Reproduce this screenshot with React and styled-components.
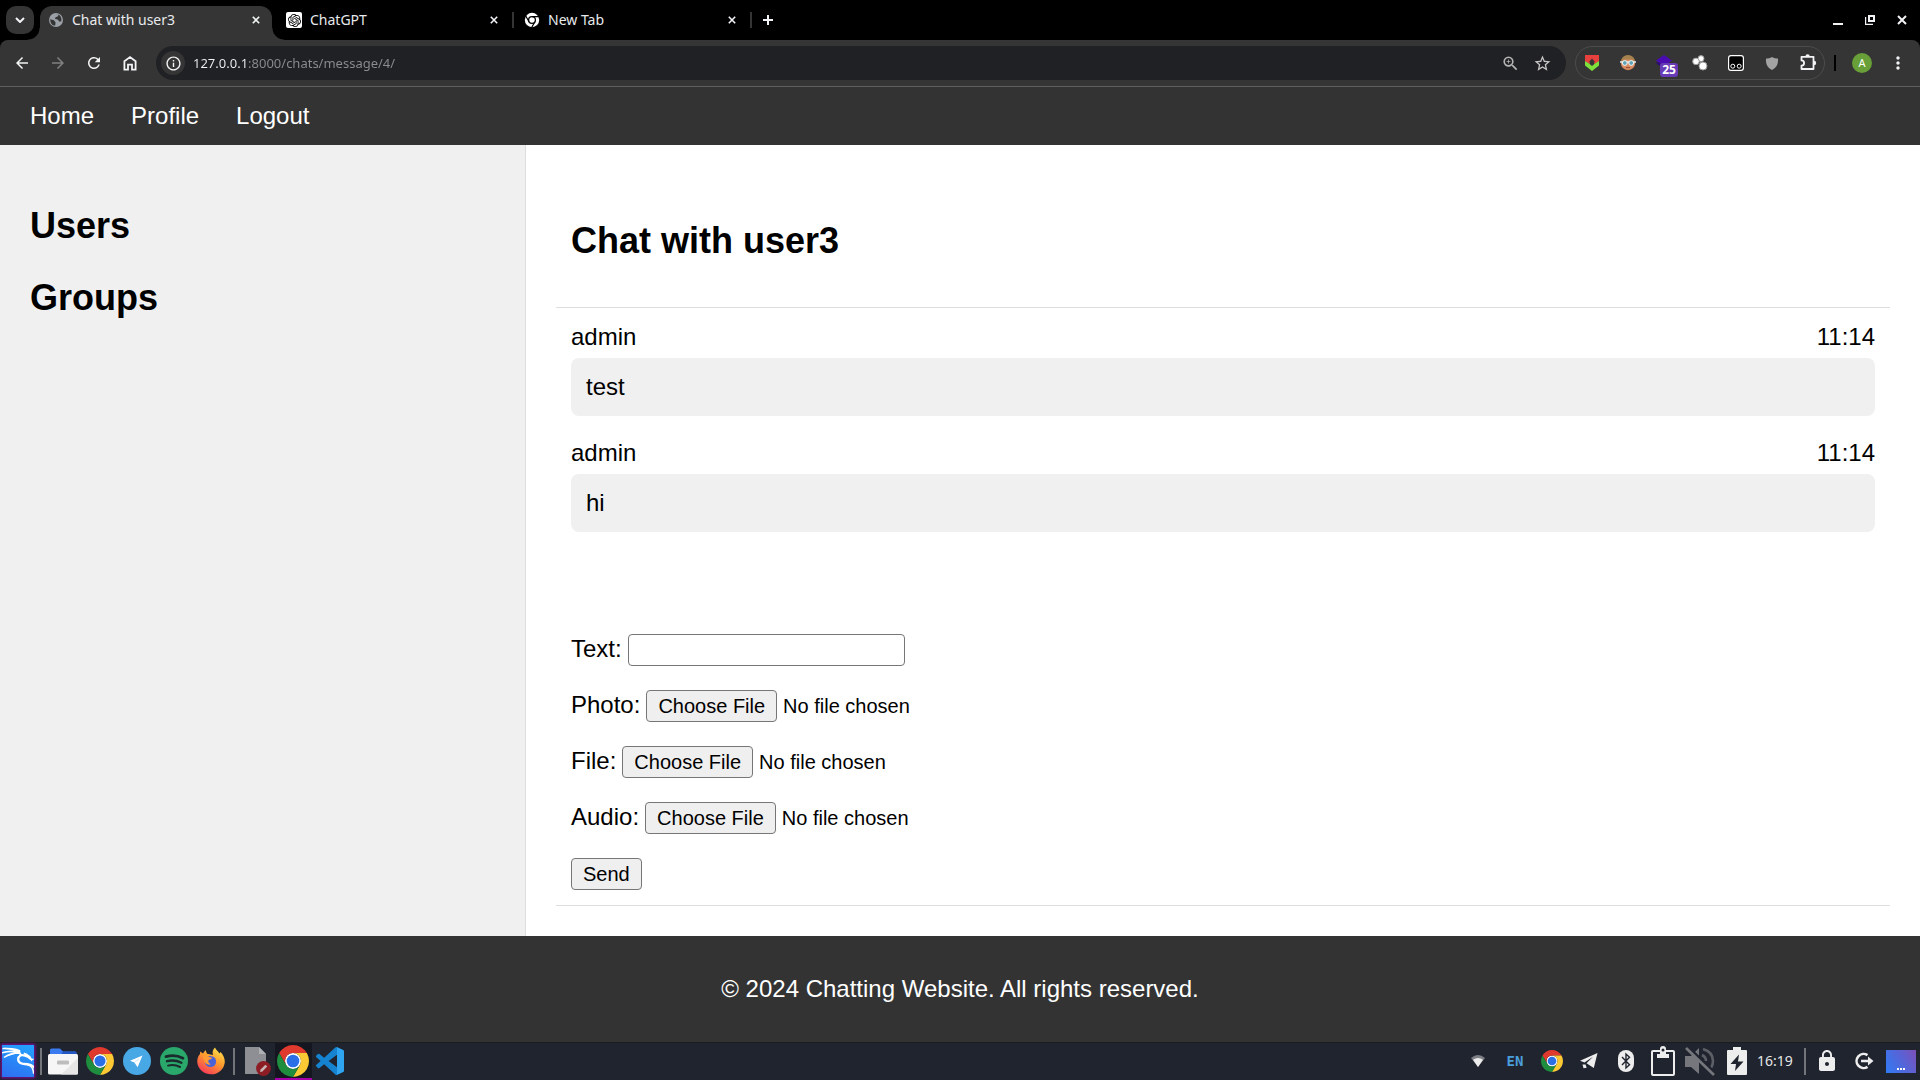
import React from "react";
import styled, { createGlobalStyle } from "styled-components";
import { SiKalilinux, SiOpenai } from "react-icons/si";
import {
  MdArrowBack,
  MdArrowForward,
  MdRefresh,
  MdInfoOutline,
  MdZoomIn,
  MdStarBorder,
  MdMoreVert,
  MdLock,
} from "react-icons/md";

const Global = createGlobalStyle`
  *, *::before, *::after { box-sizing: border-box; }
  body { margin: 0; background: #fff; }
  button { font: inherit; }
  svg { display: block; flex: none; }
`;

const uiFont = `"Noto Sans", "Open Sans", sans-serif`;
const pageFont = `"Liberation Sans", Arial, sans-serif`;

const Screen = styled.div`
  min-height: 100vh;
  display: flex;
  flex-direction: column;
`;

/* ---------- browser ---------- */

const TabStrip = styled.header`
  display: flex;
  align-items: center;
  height: 40px;
  padding: 0 2px 0 6px;
  background: #000;
  color: #e8eaed;
  font: 14px/20px ${uiFont};
`;

const PlainButton = styled.button`
  display: flex;
  align-items: center;
  justify-content: center;
  flex: none;
  width: ${(p) => p.$size || 20}px;
  height: ${(p) => p.$size || 20}px;
  padding: 0;
  border: 0;
  background: none;
  color: ${(p) => p.$color || "#f1f3f4"};
`;

const TabSearch = styled(PlainButton)`
  width: 28px;
  height: 28px;
  margin-right: 6px;
  border-radius: 10px;
  background: #353535;
`;

const Tab = styled.div`
  position: relative;
  display: flex;
  align-items: center;
  gap: 8px;
  width: 232px;
  height: 34px;
  align-self: flex-end;
  padding: 0 8px 6px;
  border-radius: 12px 12px 0 0;
  background: ${(p) => (p.$active ? "#353535" : "transparent")};

  &::before,
  &::after {
    content: "";
    display: ${(p) => (p.$active ? "block" : "none")};
    position: absolute;
    bottom: 0;
    width: 12px;
    height: 12px;
  }
  &::before {
    left: -12px;
    background: radial-gradient(circle at 0 0, transparent 11px, #353535 12px);
  }
  &::after {
    right: -12px;
    background: radial-gradient(circle at 100% 0, transparent 11px, #353535 12px);
  }
`;

const TabTitle = styled.span`
  flex: 1;
  white-space: nowrap;
`;

const TabDivider = styled.span`
  width: 2px;
  height: 16px;
  margin: 0 2px;
  background: ${(p) => (p.$hidden ? "transparent" : "#353535")};
`;

const NewTab = styled(PlainButton)`
  margin-left: 4px;
`;

const WindowControls = styled.div`
  display: flex;
  margin-left: auto;
`;

const ToolbarBack = styled.div`
  background: #000;
`;

const Toolbar = styled.div`
  display: flex;
  align-items: center;
  height: 47px;
  padding: 0 12px;
  border-bottom: 1px solid #606060;
  border-radius: 8px 8px 0 0;
  background: #353535;
`;

const NavButtons = styled.div`
  display: flex;
  gap: 16px;
  margin-right: 16px;
`;

const Omnibox = styled.div`
  display: flex;
  align-items: center;
  flex: 1;
  height: 34px;
  padding: 0 14px 0 5px;
  border-radius: 17px;
  background: #202124;
`;

const SiteInfo = styled(PlainButton)`
  border-radius: 50%;
  margin-right: 8px;
  background: #353535;
`;

const Address = styled.input`
  flex: 1;
  min-width: 0;
  height: 24px;
  padding: 0;
  border: 0;
  outline: 0;
  font: 13px/20px ${uiFont};
  color: #8c8d8f;
  -webkit-text-fill-color: transparent;
  background: linear-gradient(90deg, #f1f3f4 55px, #8c8d8f 55px);
  background-clip: text;
`;

const OmniActions = styled.div`
  display: flex;
  gap: 12px;
`;

const Extensions = styled.div`
  display: flex;
  align-items: center;
  gap: 16px;
  height: 34px;
  margin-left: 9px;
  padding: 0 6px;
  border: 1px solid #4c4c4c;
  border-radius: 17px;
`;

const ExtButton = styled(PlainButton)`
  position: relative;
`;

const Badge = styled.span`
  position: absolute;
  left: 6px;
  top: 10px;
  width: 18px;
  height: 14px;
  border-radius: 3px;
  background: #673ab7;
  color: #fff;
  font: 700 12px/14px ${uiFont};
  text-align: center;
`;

const ToolbarDivider = styled.span`
  width: 2px;
  height: 16px;
  margin: 0 16px 0 9px;
  background: #000;
`;

const Avatar = styled(PlainButton)`
  margin-right: 16px;
  border-radius: 50%;
  background: #689f38;
  color: #fff;
  font: 11px/20px ${uiFont};
`;

/* ---------- web page ---------- */

const Page = styled.div`
  display: flex;
  flex-direction: column;
  flex: 1;
  font: 24px/28px ${pageFont};
  color: #000;
  background: #fff;
`;

const SiteNav = styled.nav`
  display: flex;
  gap: 37px;
  padding: 15px 30px;
  background: #333;
`;

const SiteLink = styled.a`
  color: #fff;
  text-decoration: none;
`;

const Columns = styled.div`
  display: grid;
  grid-template-columns: 526px 1fr;
  flex: 1;
`;

const Sidebar = styled.aside`
  padding: 30px;
  background: #f0f0f0;
  border-right: 1px solid #ddd;
`;

const Heading = styled.h2`
  margin: 30px 0;
  font-size: 36px;
  line-height: 42px;
  font-weight: bold;
`;

const Chat = styled.main`
  display: flex;
  flex-direction: column;
  padding: 30px;
`;

const ChatHeader = styled.div`
  padding: 15px;
  border-bottom: 1px solid #ddd;
`;

const Messages = styled.div`
  display: flex;
  flex-direction: column;
  gap: 23px;
  padding: 15px;
`;

const MessageMeta = styled.div`
  display: flex;
  justify-content: space-between;
  margin-bottom: 7px;
`;

const Bubble = styled.div`
  padding: 15px;
  border-radius: 8px;
  background: #f0f0f0;
`;

const Composer = styled.form`
  display: flex;
  flex-direction: column;
  align-items: flex-start;
  gap: 24px;
  margin-top: auto;
  padding: 15px;
  align-self: stretch;
  border-bottom: 1px solid #ddd;
`;

const Field = styled.div`
  display: flex;
  align-items: baseline;
  gap: 6px;
  height: 32px;
`;

const TextInput = styled.input`
  width: 277px;
  height: 32px;
  padding: 1px 3px;
  border: 1px solid #767676;
  border-radius: 4px;
  background: #fff;
  font: 20px/24px ${pageFont};
`;

const FileInput = styled.input`
  font: 20px/24px ${pageFont};
  color: #000;

  &::file-selector-button {
    height: 32px;
    margin: 0 6px 0 0;
    padding: 0 11px;
    border: 1px solid #767676;
    border-radius: 4px;
    background: #efefef;
    font: inherit;
    color: #000;
  }
`;

const SendButton = styled.button`
  height: 32px;
  padding: 0 11px;
  border: 1px solid #767676;
  border-radius: 4px;
  background: #efefef;
  font: 20px/24px ${pageFont};
  color: #000;
`;

const SiteFooter = styled.footer`
  padding: 39px 15px;
  background: #333;
  color: #fff;
  text-align: center;
`;

/* ---------- desktop panel ---------- */

const Panel = styled.footer`
  display: flex;
  justify-content: space-between;
  height: 38px;
  border-top: 1px solid #1b1c20;
  background: #20242f;
`;

const PanelGroup = styled.div`
  display: flex;
`;

const PanelItem = styled.button`
  display: flex;
  align-items: center;
  justify-content: center;
  width: 37px;
  height: 37px;
  padding: 0 1px 1px 0;
  border: 0;
  background: ${(p) => (p.$active ? "#151720" : "transparent")};
  box-shadow: ${(p) => (p.$active ? "inset 0 -2px #a800a8" : "none")};
  color: #ededed;
`;

const KaliTile = styled.span`
  display: flex;
  align-items: center;
  justify-content: center;
  width: 32px;
  height: 32px;
  overflow: hidden;
  color: #fff;
  background: linear-gradient(200deg, #22a4ff, #2f6df0);
  box-shadow: 0 0 3px 1px #8a0a9c;
`;

const PanelDivider = styled.span`
  width: 2px;
  height: 27px;
  margin: 5px 3px;
  background: #73757b;
`;

const Lang = styled.span`
  font: bold 14px/20px "DejaVu Sans Mono", monospace;
  color: #4a9edb;
`;

const Clock = styled.time`
  width: 45px;
  padding-left: 1px;
  font: 14px/36px ${uiFont};
  color: #e6e6e6;
`;

const Workspace = styled.span`
  display: flex;
  justify-content: center;
  align-items: flex-end;
  gap: 1px;
  width: 30px;
  height: 23px;
  padding-bottom: 3px;
  background: linear-gradient(60deg, #2f7bf5, #5a62d4 60%, #7e4fb8);
`;

const Dot = styled.i`
  width: 2px;
  height: 2px;
  background: #fff;
`;

/* ---------- drawings ---------- */

const CloseIcon = ({ s = 10, w = 2 }) => (
  <svg width={s} height={s} viewBox="0 0 10 10" stroke="currentColor" strokeWidth={w}>
    <path d="M1 1L9 9M9 1L1 9" />
  </svg>
);

const GlobeIcon = () => (
  <svg width="16" height="16" viewBox="0 0 16 16">
    <circle cx="8" cy="8" r="7" fill="#9aa0a6" />
    <path d="M2.2 7.2L6 8.3L7.6 10.4L7.2 13.6C4 13.6 2.2 11 2.2 7.2ZM7.6 2.3L10.6 2.7L9.6 4.6L7.6 5.2L6.9 6.8L9.6 7.6L11.6 9.8L13.4 8.9C13.8 6 12.6 3.6 10.4 2.6Z" fill="#353535" />
  </svg>
);

const ChromeIcon = ({ size }) => (
  <svg width={size} height={size} viewBox="0 0 48 48">
    <circle cx="24" cy="24" r="12" fill="#fff" />
    <path fill="#e0392d" d="M24 12H44.78A24 24 0 0 0 3.22 12L13.61 30A12 12 0 0 1 24 12Z" />
    <path fill="#fcc934" d="M34.39 30L24 48A24 24 0 0 0 44.78 12H24A12 12 0 0 1 34.39 30Z" />
    <path fill="#1e8e3e" d="M13.61 30L3.22 12A24 24 0 0 0 24 48L34.39 30A12 12 0 0 1 13.61 30Z" />
    <circle cx="24" cy="24" r="9.5" fill="#2b6fe6" />
  </svg>
);

const MonoChromeIcon = () => (
  <svg width="16" height="16" viewBox="0 0 16 16">
    <circle cx="8" cy="8" r="7.2" fill="#fff" />
    <circle cx="8" cy="8" r="3.4" fill="#fff" stroke="#000" strokeWidth="1.3" />
    <path d="M8 4.600H15M5.060 9.700L1.600 3.700M10.940 9.700L7.500 15.700" stroke="#000" strokeWidth="1.200" />
  </svg>
);

const HomeIcon = () => (
  <svg width="14" height="16" viewBox="0 0 14 16" fill="none" stroke="currentColor" strokeWidth="1.8">
    <path d="M1.400 6.200L7 2L12.600 6.200V14.600H9V9.600H5V14.600H1.400Z" />
  </svg>
);

const PuzzleIcon = () => (
  <svg width="20" height="20" viewBox="0 0 20 20">
    <path
      d="M3.500 3.800H15.500V16H3.500V12.600A2.600 2.600 0 0 0 3.500 7.400Z"
      fill="none"
      stroke="#f1f3f4"
      strokeWidth="1.800"
      strokeLinejoin="round"
    />
    <path d="M7.400 3.400A2.200 2.200 0 0 1 11.800 3.400ZM16 7.800A2.200 2.200 0 0 1 16 12.200Z" fill="#f1f3f4" />
  </svg>
);

const OpenAiTile = styled.span`
  display: flex;
  align-items: center;
  justify-content: center;
  width: 16px;
  height: 16px;
  border-radius: 2px;
  background: #fff;
  color: #000;
`;

const ShieldVIcon = () => (
  <svg width="14" height="16" viewBox="0 0 14 16">
    <path d="M0 0H14V6L10 9L7 6L4 9L0 6Z" fill="#e8403c" />
    <path d="M0 6L4 8.500L7 11L10 8.500L14 6V10.500L7 16L0 10.500Z" fill="#7ee03a" />
    <path d="M7 3.600L9.800 6.700L7 9.800L4.200 6.700Z" fill="#353535" />
  </svg>
);

const FaceIcon = () => (
  <svg width="18" height="18" viewBox="0 0 18 18">
    <circle cx="9" cy="9" r="7.2" fill="#d88a60" />
    <path d="M1.8 8A7.2 7 0 0 1 16.2 8L13 5.6H5Z" fill="#a5824e" />
    <path d="M1 8H17" stroke="#dfe7ea" strokeWidth="1.6" />
    <circle cx="5.8" cy="9" r="2.4" fill="#5fa3b5" stroke="#f4f8f9" strokeWidth="1" />
    <circle cx="12.2" cy="9" r="2.4" fill="#5fa3b5" stroke="#f4f8f9" strokeWidth="1" />
    <path d="M7 13.6H11" stroke="#9c4c36" strokeWidth="1" />
  </svg>
);

const DiamondIcon = () => (
  <svg width="18" height="18" viewBox="0 0 18 18">
    <path d="M9 1L17 6.500L9 12L1 6.500Z" fill="#4a0bb0" />
    <path d="M1 9L9 15V12L3 8Z" fill="#2c0a78" />
  </svg>
);

const BlobsIcon = () => (
  <svg width="18" height="18" viewBox="0 0 18 18" fill="#fff" stroke="#9b9b9b" strokeWidth="1">
    <circle cx="10" cy="4.6" r="3" />
    <circle cx="5" cy="7.4" r="3.3" />
    <circle cx="12" cy="12" r="4" />
  </svg>
);

const MonkeyIcon = () => (
  <svg width="16" height="16" viewBox="0 0 16 16">
    <rect x=".6" y=".6" width="14.8" height="14.8" rx="2.4" fill="#000" stroke="#fff" strokeWidth="1.2" />
    <circle cx="4.8" cy="11.2" r="2" fill="none" stroke="#fff" />
    <circle cx="11.2" cy="11.2" r="2" fill="none" stroke="#fff" />
  </svg>
);

const GreyShieldIcon = () => (
  <svg width="14" height="15" viewBox="0 0 14 15">
    <path d="M7 1C9 2 11 2.6 13 2.6C13.4 8 11.6 12 7 14C2.4 12 .6 8 1 2.6C3 2.6 5 2 7 1Z" fill="#a3a3a3" />
  </svg>
);

const FolderIcon = () => (
  <svg width="30" height="27" viewBox="0 0 30 27">
    <path d="M2 2Q2 .5 3.5 .5H12L15 3.5H27Q28.500 3.500 28.500 5V12H2Z" fill="#3a7cf0" />
    <path d="M15 3.500H27Q28.500 3.500 28.500 5V7H13Z" fill="#2257c4" />
    <rect y="6" width="30" height="20.500" rx="1.500" fill="#f6f6f6" />
    <path d="M30 10V25Q30 26.500 28.500 26.500H13Z" fill="#e6e6e6" />
    <rect x="9" y="12.500" width="12" height="4" rx="1" fill="#bdbdbd" />
  </svg>
);

const TelegramIcon = () => (
  <svg width="28" height="28" viewBox="0 0 28 28">
    <circle cx="14" cy="14" r="14" fill="#47a8e5" />
    <path d="M19.500 8.500L7 13.800L11.400 15.600L14.600 20.200Z" fill="#fff" />
    <path d="M11.400 15.600L16 12" stroke="#cfe6f6" strokeWidth="1" />
  </svg>
);

const SpotifyIcon = () => (
  <svg width="28" height="28" viewBox="0 0 28 28" fill="none" stroke="#1b2a2c" strokeLinecap="round">
    <circle cx="14" cy="14" r="14" fill="#2aa76a" stroke="none" />
    <path d="M6 9.600Q15 7 23 11.200" strokeWidth="2.800" />
    <path d="M7 14.200Q14.500 12.200 21.400 15.800" strokeWidth="2.400" />
    <path d="M8 18.600Q14.500 17 20 20" strokeWidth="2" />
  </svg>
);

const FirefoxIcon = () => (
  <svg width="28" height="28" viewBox="0 0 28 28">
    <defs>
      <linearGradient id="fox" x1=".8" y1="0" x2=".2" y2="1">
        <stop offset="0" stopColor="#ffe34a" />
        <stop offset=".45" stopColor="#ff9a2e" />
        <stop offset="1" stopColor="#f5325c" />
      </linearGradient>
    </defs>
    <path d="M18 .5C19 3 21 4 22.500 6.500L23.500 5C26 7.500 27.800 11 27.800 15A13.800 13.200 0 0 1 .3 15.500C0 12 1 9 3 7L3.200 4.500L6 6.500L8.500 3L10 6.800L16 8C15 5 16 2 18 .5Z" fill="url(#fox)" />
    <circle cx="13.500" cy="14.500" r="5.600" fill="#4a62d8" />
    <path d="M6 9.500Q9 8 12 10L15.500 10.800Q14 12.600 11.500 13Q10.500 16 14 17.200Q10 18.600 8 15.500Q6.500 13 6 9.500Z" fill="#ff9a35" />
  </svg>
);

const EditorIcon = () => (
  <svg width="30" height="30" viewBox="0 0 30 30">
    <path d="M4 1H18L25 8V28H4Z" fill="#8d8f95" />
    <path d="M18 1L25 8H18Z" fill="#aeb0b4" />
    <circle cx="22.500" cy="22.500" r="7.400" fill="#8c1d24" />
    <path d="M19 26L19.600 23.600L24.400 18.800L26.200 20.600L21.400 25.400Z" fill="#c9b4b5" />
  </svg>
);

const CodeIcon = () => (
  <svg width="28" height="28" viewBox="0 0 24 24">
    <path
      fill="#1583cf"
      d="M23.15 2.587L18.21.21a1.494 1.494 0 0 0-1.705.29l-9.46 8.63-4.12-3.128a.999.999 0 0 0-1.276.057L.327 7.261A1 1 0 0 0 .326 8.74L3.899 12 .326 15.26a1 1 0 0 0 .001 1.479L1.65 17.94a.999.999 0 0 0 1.276.057l4.12-3.128 9.46 8.63a1.492 1.492 0 0 0 1.704.29l4.942-2.377A1.5 1.5 0 0 0 24 20.06V3.939a1.5 1.5 0 0 0-.85-1.352zm-5.146 14.861L10.826 12l7.178-5.448v10.896z"
    />
    <path fill="#2fa4f0" d="M18.004 .2L23.150 2.587A1.500 1.500 0 0 1 24 3.940V20.060A1.500 1.500 0 0 1 23.150 21.400L18.004 23.800Z" />
  </svg>
);

const WifiIcon = () => (
  <svg width="16" height="14" viewBox="0 0 16 14">
    <path d="M1 4Q8 -2 15 4L8 13Z" fill="#7d7f85" />
    <path d="M3 5.800Q8 2.400 13 5.800L8 13Z" fill="#ededed" />
  </svg>
);

const PlaneIcon = () => (
  <svg width="20" height="18" viewBox="0 0 20 18" fill="#ededed">
    <path d="M18.500 1L1 8.800L5.500 10.400L14 4.800L7.500 11.200L14.800 16Z" />
    <path d="M3.500 12.500L6.600 12.500L7.600 15.800L4.500 16.200Z" />
  </svg>
);

const BluetoothIcon = () => (
  <svg width="16" height="22" viewBox="0 0 16 22">
    <rect width="16" height="22" rx="8" fill="#ededed" />
    <path d="M4 7L11.500 14.800L8 18V4L11.500 7.200L4 15" fill="none" stroke="#20242f" strokeWidth="1.400" />
  </svg>
);

const ClipboardIcon = () => (
  <svg width="24" height="30" viewBox="0 0 24 30">
    <rect x="1" y="5" width="22" height="24" rx="1" fill="none" stroke="#ededed" strokeWidth="2" />
    <path d="M6 12V8H9V3A3 3 0 0 1 15 3V8H18V12Z" fill="#ededed" />
    <circle cx="12" cy="4" r="1.500" fill="#20242f" />
  </svg>
);

const MuteIcon = () => (
  <svg width="30" height="30" viewBox="0 0 30 30">
    <path d="M0 10H6L14 2V28L6 21H0Z" fill="#75777d" />
    <path d="M18 3Q28 6 28 15Q28 19 26 22M17 9Q21 11 21 15" fill="none" stroke="#5c5f66" strokeWidth="2.600" />
    <path d="M3 1L30 27" stroke="#20242f" strokeWidth="3" />
    <path d="M1 2L29 29" stroke="#75777d" strokeWidth="2.600" />
  </svg>
);

const BatteryIcon = () => (
  <svg width="20" height="28" viewBox="0 0 20 28">
    <path d="M6 0H14V3H19Q20 3 20 4V27Q20 28 19 28H1Q0 28 0 27V4Q0 3 1 3H6Z" fill="#ededed" />
    <path d="M12 7.500L3.500 17H9L8 24L16.500 14.500H11Z" fill="#20242f" />
  </svg>
);

const LogoutIcon = () => (
  <svg width="20" height="18" viewBox="0 0 20 18">
    <path d="M13.500 3.200A7 7 0 1 0 13.500 14.800" fill="none" stroke="#ededed" strokeWidth="2.600" />
    <path d="M7 7.800H14V4.600L19.500 9L14 13.400V10.200H7Z" fill="#ededed" />
  </svg>
);

/* ---------- content ---------- */

const tabs = [
  { title: "Chat with user3", icon: <GlobeIcon />, active: true },
  { title: "ChatGPT", icon: <OpenAiTile><SiOpenai size={13} /></OpenAiTile> },
  { title: "New Tab", icon: <MonoChromeIcon /> },
];

const extensions = [
  ["Protection", <ShieldVIcon />],
  ["Profile switcher", <FaceIcon />],
  ["Layers", <DiamondIcon />, "25"],
  ["Molecules", <BlobsIcon />],
  ["Scripts", <MonkeyIcon />],
  ["Privacy shield", <GreyShieldIcon />],
  ["Extensions", <PuzzleIcon />],
];

const messages = [
  { from: "admin", time: "11:14", body: "test" },
  { from: "admin", time: "11:14", body: "hi" },
];

const launchers = [
  ["Files", <FolderIcon />],
  ["Chrome", <ChromeIcon size={28} />],
  ["Telegram", <TelegramIcon />],
  ["Spotify", <SpotifyIcon />],
  ["Firefox", <FirefoxIcon />],
];

const tray = [
  ["Network", <WifiIcon />],
  ["Keyboard layout", <Lang>EN</Lang>],
  ["Chrome", <ChromeIcon size={22} />],
  ["Telegram", <PlaneIcon />],
  ["Bluetooth", <BluetoothIcon />],
  ["Clipboard", <ClipboardIcon />],
  ["Volume", <MuteIcon />],
  ["Battery", <BatteryIcon />],
];

function Browser() {
  return (
    <>
      <TabStrip>
        <TabSearch aria-label="Search tabs">
          <svg width="10" height="6" viewBox="0 0 10 6" fill="none" stroke="currentColor" strokeWidth="2">
            <path d="M1 1L5 5L9 1" />
          </svg>
        </TabSearch>
        {tabs.map((t) => (
          <React.Fragment key={t.title}>
            <Tab $active={t.active}>
              {t.icon}
              <TabTitle>{t.title}</TabTitle>
              <PlainButton $size={16} aria-label={`Close ${t.title}`}>
                <CloseIcon s={8} />
              </PlainButton>
            </Tab>
            <TabDivider $hidden={t.active} />
          </React.Fragment>
        ))}
        <NewTab aria-label="New tab">
          <svg width="10" height="10" viewBox="0 0 10 10" stroke="currentColor" strokeWidth="2">
            <path d="M5 0V10M0 5H10" />
          </svg>
        </NewTab>
        <WindowControls>
          <PlainButton $size={32} aria-label="Minimize">
            <svg width="10" height="10" viewBox="0 0 10 10"><path d="M0 8H10V10H0Z" fill="currentColor" /></svg>
          </PlainButton>
          <PlainButton $size={32} aria-label="Restore">
            <svg width="10" height="10" viewBox="0 0 10 10" fill="none" stroke="currentColor">
              <rect x="4" y="1" width="5" height="5" strokeWidth="2" />
              <path d="M.5 2V9.500H8" strokeWidth="1.400" />
            </svg>
          </PlainButton>
          <PlainButton $size={32} aria-label="Close window">
            <CloseIcon />
          </PlainButton>
        </WindowControls>
      </TabStrip>
      <ToolbarBack>
        <Toolbar>
          <NavButtons>
            <PlainButton aria-label="Back"><MdArrowBack size={18} /></PlainButton>
            <PlainButton aria-label="Forward" $color="#808080"><MdArrowForward size={18} /></PlainButton>
            <PlainButton aria-label="Reload"><MdRefresh size={18} /></PlainButton>
            <PlainButton aria-label="Home page"><HomeIcon /></PlainButton>
          </NavButtons>
          <Omnibox>
            <SiteInfo $size={24} aria-label="Site information"><MdInfoOutline size={17} /></SiteInfo>
            <Address aria-label="Address" defaultValue="127.0.0.1:8000/chats/message/4/" />
            <OmniActions>
              <PlainButton aria-label="Zoom" $color="#b4b4b5"><MdZoomIn size={19} /></PlainButton>
              <PlainButton aria-label="Bookmark" $color="#c7c7c7"><MdStarBorder size={19} /></PlainButton>
            </OmniActions>
          </Omnibox>
          <Extensions>
            {extensions.map(([name, icon, badge]) => (
              <ExtButton key={name} aria-label={name}>
                {icon}
                {badge && <Badge>{badge}</Badge>}
              </ExtButton>
            ))}
          </Extensions>
          <ToolbarDivider />
          <Avatar aria-label="Account">A</Avatar>
          <PlainButton aria-label="Menu"><MdMoreVert size={20} /></PlainButton>
        </Toolbar>
      </ToolbarBack>
    </>
  );
}

function ChatPage() {
  return (
    <Page>
      <SiteNav>
        <SiteLink href="#home">Home</SiteLink>
        <SiteLink href="#profile">Profile</SiteLink>
        <SiteLink href="#logout">Logout</SiteLink>
      </SiteNav>
      <Columns>
        <Sidebar>
          <Heading>Users</Heading>
          <Heading>Groups</Heading>
        </Sidebar>
        <Chat>
          <ChatHeader>
            <Heading>Chat with user3</Heading>
          </ChatHeader>
          <Messages>
            {messages.map((m) => (
              <article key={m.body}>
                <MessageMeta>
                  <span>{m.from}</span>
                  <time>{m.time}</time>
                </MessageMeta>
                <Bubble>{m.body}</Bubble>
              </article>
            ))}
          </Messages>
          <Composer onSubmit={(e) => e.preventDefault()}>
            <Field>
              <label htmlFor="text">Text:</label>
              <TextInput id="text" type="text" />
            </Field>
            {["Photo", "File", "Audio"].map((name) => (
              <Field key={name}>
                <label htmlFor={name}>{name}:</label>
                <FileInput id={name} type="file" />
              </Field>
            ))}
            <SendButton type="submit">Send</SendButton>
          </Composer>
        </Chat>
      </Columns>
      <SiteFooter>© 2024 Chatting Website. All rights reserved.</SiteFooter>
    </Page>
  );
}

function DesktopPanel() {
  return (
    <Panel>
      <PanelGroup>
        <PanelItem aria-label="Applications">
          <KaliTile>
            <SiKalilinux size={34} stroke="currentColor" strokeWidth={0.9} />
          </KaliTile>
        </PanelItem>
        <PanelDivider />
        {launchers.map(([name, icon]) => (
          <PanelItem key={name} aria-label={name}>{icon}</PanelItem>
        ))}
        <PanelDivider />
        <PanelItem aria-label="Text editor"><EditorIcon /></PanelItem>
        <PanelItem aria-label="Chrome window" $active><ChromeIcon size={32} /></PanelItem>
        <PanelItem aria-label="Code"><CodeIcon /></PanelItem>
      </PanelGroup>
      <PanelGroup>
        {tray.map(([name, icon]) => (
          <PanelItem key={name} aria-label={name}>{icon}</PanelItem>
        ))}
        <Clock>16:19</Clock>
        <PanelDivider />
        <PanelItem aria-label="Lock"><MdLock size={24} /></PanelItem>
        <PanelItem aria-label="Log out"><LogoutIcon /></PanelItem>
        <PanelItem aria-label="Workspace">
          <Workspace><Dot /><Dot /><Dot /></Workspace>
        </PanelItem>
      </PanelGroup>
    </Panel>
  );
}

export default function App() {
  return (
    <Screen>
      <Global />
      <Browser />
      <ChatPage />
      <DesktopPanel />
    </Screen>
  );
}
